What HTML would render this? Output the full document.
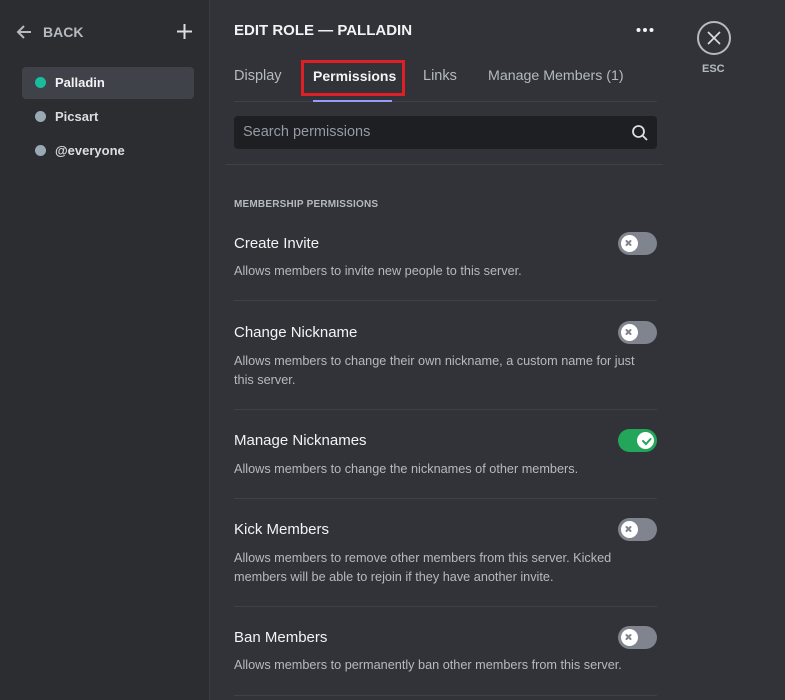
<!DOCTYPE html>
<html><head><style>
*{margin:0;padding:0;box-sizing:border-box}
body{width:785px;height:700px;background:#313338;font-family:"Liberation Sans",sans-serif;position:relative;overflow:hidden;color:#f2f3f5}
.side{position:absolute;left:0;top:0;width:210px;height:700px;background:#2b2d31;border-right:1px solid #3a3c42}
.a{position:absolute}
.role{position:absolute;left:22px;width:172px;height:32px;border-radius:4px;font-size:13px;font-weight:bold;color:#dbdee1;padding:8px 0 0 33px}
.role i{position:absolute;left:13px;top:10px;width:11px;height:11px;border-radius:50%;background:#99aab5}
.t{position:absolute;left:234px;font-size:15px;color:#f2f3f5}
.d{position:absolute;left:234px;font-size:12.7px;color:#b5bac1;line-height:19px;width:415px}
.hr{position:absolute;left:234px;width:423px;height:1px;background:#3f4147}
.tg{position:absolute;left:618px;width:39px;height:23px;border-radius:12px;background:#80848e}
.tg b{position:absolute;left:3px;top:3px;width:17px;height:17px;border-radius:50%;background:#fff}
.tg.on{background:#23a55a}.tg.on b{left:19px}
</style></head><body>
<div class="side"></div>
<svg class="a" style="left:15px;top:23px" width="18" height="18" viewBox="0 0 18 18"><path d="M16 9H3M9 3L3 9l6 6" stroke="#b5bac1" stroke-width="2" fill="none"/></svg>
<div class="a" style="left:43px;top:24px;font-size:14px;font-weight:bold;color:#b5bac1">BACK</div>
<svg class="a" style="left:177px;top:24px" width="15" height="15"><path d="M7.5 0v15M0 7.5h15" stroke="#dbdee1" stroke-width="2"/></svg>
<div class="role" style="top:67px;background:#404249;color:#f2f3f5"><i style="background:#1abc9c"></i>Palladin</div>
<div class="role" style="top:101px"><i></i>Picsart</div>
<div class="role" style="top:135px"><i></i>@everyone</div>

<div class="a" style="left:234px;top:22px;font-size:15px;font-weight:bold">EDIT ROLE — PALLADIN</div>
<svg class="a" style="left:636px;top:26px" width="20" height="8"><circle cx="2.5" cy="4" r="2" fill="#f2f3f5"/><circle cx="9" cy="4" r="2" fill="#f2f3f5"/><circle cx="15.5" cy="4" r="2" fill="#f2f3f5"/></svg>
<div class="a" style="left:697px;top:21px;width:34px;height:34px;border:2px solid #b5bac1;border-radius:50%"></div>
<svg class="a" style="left:706px;top:30px" width="16" height="16"><path d="M2 2l12 12M14 2L2 14" stroke="#dbdee1" stroke-width="1.6"/></svg>
<div class="a" style="left:702px;top:63px;font-size:11px;font-weight:bold;color:#b5bac1">ESC</div>

<div class="a" style="left:234px;top:68px;font-size:14.5px;color:#b5bac1">Display</div>
<div class="a" style="left:313px;top:68px;font-size:14px;font-weight:bold;color:#f2f3f5">Permissions</div>
<div class="a" style="left:301px;top:60px;width:104px;height:36px;border:3px solid #e01e26"></div>
<div class="a" style="left:423px;top:68px;font-size:14.5px;color:#b5bac1">Links</div>
<div class="a" style="left:488px;top:68px;font-size:14.2px;color:#b5bac1">Manage Members (1)</div>
<div class="a" style="left:234px;top:101px;width:423px;height:1px;background:#3f4147"></div>
<div class="a" style="left:313px;top:100px;width:79px;height:2px;background:#949cf7"></div>
<div class="a" style="left:234px;top:116px;width:423px;height:33px;background:#1e1f22;border-radius:4px"></div>
<div class="a" style="left:243px;top:124px;font-size:14.5px;color:#949ba4">Search permissions</div>
<svg class="a" style="left:631px;top:124px" width="18" height="18"><circle cx="7.5" cy="7.5" r="5.5" stroke="#dbdee1" stroke-width="1.8" fill="none"/><path d="M11.5 11.5L16 16" stroke="#dbdee1" stroke-width="1.8"/></svg>
<div class="a" style="left:226px;top:164px;width:437px;height:1px;background:#3f4147"></div>

<div class="a" style="left:234px;top:199px;font-size:10px;font-weight:bold;color:#b5bac1;letter-spacing:.2px">MEMBERSHIP PERMISSIONS</div>

<div class="t" style="top:235px">Create Invite</div>
<div class="tg" style="top:232px"><b></b></div>
<div class="d" style="top:262px">Allows members to invite new people to this server.</div>
<div class="hr" style="top:300px"></div>

<div class="t" style="top:324px">Change Nickname</div>
<div class="tg" style="top:321px"><b></b></div>
<div class="d" style="top:352px">Allows members to change their own nickname, a custom name for just this server.</div>
<div class="hr" style="top:409px"></div>

<div class="t" style="top:432px">Manage Nicknames</div>
<div class="tg on" style="top:429px"><b></b></div>
<div class="d" style="top:460px">Allows members to change the nicknames of other members.</div>
<div class="hr" style="top:498px"></div>

<div class="t" style="top:521px">Kick Members</div>
<div class="tg" style="top:518px"><b></b></div>
<div class="d" style="top:549px">Allows members to remove other members from this server. Kicked members will be able to rejoin if they have another invite.</div>
<div class="hr" style="top:606px"></div>

<div class="t" style="top:629px">Ban Members</div>
<div class="tg" style="top:626px"><b></b></div>
<div class="d" style="top:656px">Allows members to permanently ban other members from this server.</div>
<div class="hr" style="top:695px"></div>

<svg class="a" style="left:618px;top:0" width="40" height="700">
<g stroke="#80848e" stroke-width="2" stroke-linecap="round">
<path d="M8.5 241l4 4M12.5 241l-4 4"/>
<path d="M8.5 330l4 4M12.5 330l-4 4"/>
<path d="M8.5 527l4 4M12.5 527l-4 4"/>
<path d="M8.5 635l4 4M12.5 635l-4 4"/>
</g>
<path d="M25 441l3 3 4.5-5" stroke="#23a55a" stroke-width="2" fill="none" stroke-linecap="round"/>
</svg>
</body></html>
